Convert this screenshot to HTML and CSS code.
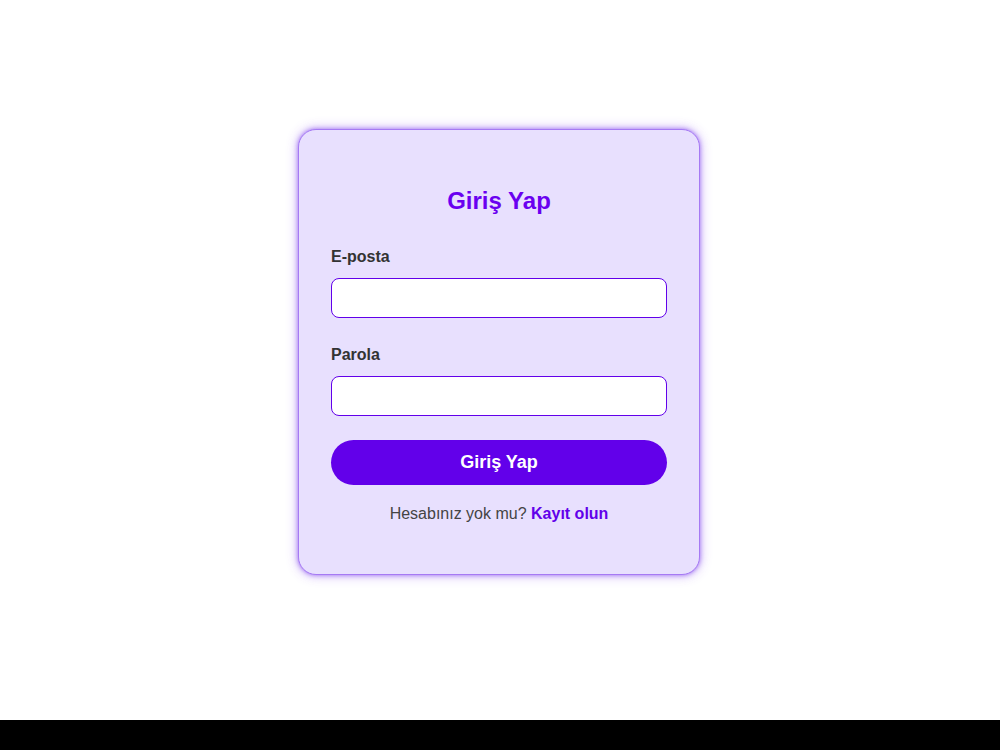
FILE: index.html
```html
<!DOCTYPE html>
<html lang="tr">
<head>
    <meta charset="UTF-8">
    <meta name="viewport" content="width=device-width, initial-scale=1.0">
    <title>Giriş Yap</title>
    <link rel="stylesheet" href="styles.css">
</head>
<body>
    <div class="page">
        <div class="login-box">
            <h2>Giriş Yap</h2>

            <form class="login-form" onsubmit="return false;">
                <div class="form-group">
                    <label for="email">E-posta</label>
                    <input type="email" id="email">
                </div>

                <div class="form-group">
                    <label for="password">Parola</label>
                    <input type="password" id="password">
                </div>

                <button type="submit" class="login-btn">Giriş Yap</button>
            </form>

            <p class="register-text">Hesabınız yok mu? <a href="#">Kayıt olun</a></p>
        </div>
    </div>
</body>
</html>
```

FILE: styles.css
```css
html {
    background: #000;
}

body {
    margin: 0;
    font-family: 'Liberation Sans', Arial, sans-serif;
}

.page {
    height: 720px;
    background: #fff;
    display: flex;
    justify-content: center;
    align-items: flex-start;
    padding: 129px 2px 0 0;
    box-sizing: border-box;
}

.login-box {
    width: 402px;
    box-sizing: border-box;
    background: #e8e0fe;
    border: 1px solid #a67af4;
    border-radius: 18px;
    padding: 32px 32px 51px;
    box-shadow: 0 0 4px rgba(124, 58, 237, 0.6), 0 0 12px rgba(124, 58, 237, 0.45);
}

.login-box h2 {
    text-align: center;
    color: #6a00f0;
    font-size: 24px;
    line-height: 28px;
    margin: 25px 0 32px;
}

.form-group {
    margin-bottom: 27px;
}

.form-group label {
    display: block;
    font-weight: bold;
    font-size: 16px;
    line-height: 19px;
    color: #333;
    margin-bottom: 12px;
}

.form-group input {
    width: 100%;
    height: 40px;
    box-sizing: border-box;
    border: 1px solid #6200ea;
    border-radius: 8px;
    background: #fff;
    padding: 8px 12px;
    font-family: inherit;
    font-size: 16px;
}

.form-group input:focus {
    outline: none;
    box-shadow: 0 0 6px rgba(98, 0, 234, 0.3);
}

.login-form .form-group:last-of-type {
    margin-bottom: 24px;
}

.login-btn {
    display: block;
    width: 100%;
    height: 45px;
    border: none;
    border-radius: 23px;
    background: #6200ea;
    color: #fff;
    font-family: inherit;
    font-size: 18px;
    font-weight: bold;
    cursor: pointer;
}

.login-btn:hover {
    background: #5300c8;
}

.register-text {
    text-align: center;
    margin: 19px 0 0;
    font-size: 16px;
    line-height: 19px;
    color: #444;
}

.register-text a {
    color: #6200ea;
    font-weight: bold;
    text-decoration: none;
}
```
